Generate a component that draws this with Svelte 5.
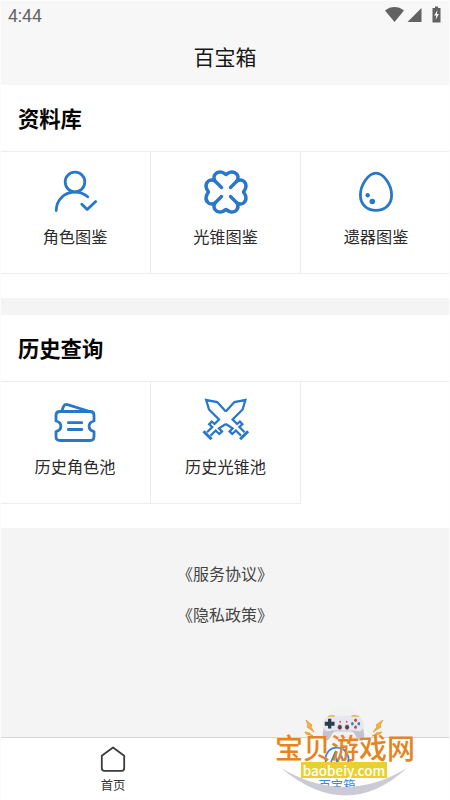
<script lang="ts">
  type Item = { icon: string; label: string };

  const sections: { title: string; items: Item[] }[] = [
    {
      title: '资料库',
      items: [
        { icon: 'role', label: '角色图鉴' },
        { icon: 'clover', label: '光锥图鉴' },
        { icon: 'egg', label: '遗器图鉴' },
      ],
    },
    {
      title: '历史查询',
      items: [
        { icon: 'ticket', label: '历史角色池' },
        { icon: 'swords', label: '历史光锥池' },
      ],
    },
  ];

  const links = ['《服务协议》', '《隐私政策》'];
</script>

<div class="page">
  <header>
    <div class="status">
      <span class="time">4:44</span>
      <svg class="status-icons" width="60" height="18" viewBox="0 0 60 18" fill="#626262">
        <path d="M2 4.500C8-.1 15-.1 21 4.500L11.500 16z" />
        <path d="M38.500 2v14H24.500z" />
        <path d="M49.500 2h2.500V.5h3V2h2.500v14.500h-8z" />
        <path d="M54.500 4l-3.300 5.500h2l-.6 4.300 3.300-5.800h-2z" fill="#f7f7f7" />
      </svg>
    </div>
    <h1>百宝箱</h1>
  </header>

  <main>
    {#each sections as section}
      <section>
        <h2>{section.title}</h2>
        <div class="grid">
          {#each section.items as item}
            <button class="cell" type="button">
              <svg class="icon" width="48" height="48" viewBox="0 0 48 48">
                {#if item.icon === 'role'}
                  <circle cx="24" cy="14" r="9.8" />
                  <path d="M5.200 42.500C5.500 31.500 13.500 24.200 24 24.200c5 0 9.300 1.700 12.700 4.600M30.800 36.200l5.400 5.400 8.500-8" />
                {:else if item.icon === 'clover'}
                  <g class="clover" transform="translate(24 24)">
                    {#each [0, 90, 180, 270] as angle}
                      <path
                        transform="rotate({angle})"
                        d="M-4.500-4.500L-11-11C-14-16.500-9.500-20.800-4.500-19.800Q-2.500-19.300 0-17.500Q2.500-19.300 4.500-19.800C9.500-20.800 14-16.500 11-11"
                      />
                    {/each}
                  </g>
                {:else if item.icon === 'egg'}
                  <path d="M24 5.200c7.500 0 15.600 11.500 15.600 21.800 0 9.500-6.600 15.400-15.600 15.400S8.400 36.500 8.400 27C8.400 16.700 16.500 5.200 24 5.200z" />
                  <g class="dots">
                    <circle cx="15.700" cy="27.200" r="2.200" />
                    <circle cx="20.300" cy="33.500" r="2.800" />
                  </g>
                {:else if item.icon === 'ticket'}
                  <path d="M9 13.500h30q4 0 4 4v5.500c-6.500 1.500-6.500 9 0 10.500v5q0 4-4 4H9q-4 0-4-4v-5c6.500-1.500 6.500-9 0-10.500v-5.500q0-4 4-4z" />
                  <path d="M11 12.500l1.500-4q1.200-2.600 4-1.800L37 13M17.300 24.700h13.500M17.300 31.500h13.500" />
                {:else}
                  <g class="swords">
                    {#each ['', 'translate(47.600 0) scale(-1 1)'] as side}
                      <path
                        transform={side}
                        d="M23.800 13.500L15.200 4 4.200 2l2.800 9.500 10 10L12.500 26l-2.800-2.500-2.500 2.700 3 2.800L5 34.200M8.500 37.700l5.200-5.200 3.600 3.500 2.700-2.600-3-3L23.800 26"
                      />
                      <path class="pommel" transform={side} d="M1.500 33.300l8 8" />
                    {/each}
                  </g>
                {/if}
              </svg>
              <span>{item.label}</span>
            </button>
          {/each}
        </div>
      </section>
    {/each}

    <div class="links">
      {#each links as link}
        <span>{link}</span>
      {/each}
    </div>
  </main>

  <nav>
    <div class="tab">
      <svg width="28" height="28" viewBox="0 0 28 28" fill="none" stroke="#3c3c3f" stroke-width="1.800" stroke-linejoin="round">
        <path d="M14 2.500l11.200 8.300v12.500q0 2.500-2.500 2.500H5.300q-2.500 0-2.500-2.500V10.800z" />
      </svg>
      <span>首页</span>
    </div>
    <div class="tab active">
      <svg width="28" height="28" viewBox="0 0 28 28" fill="none" stroke="#3d86df" stroke-width="1.800">
        <circle cx="14" cy="14" r="11.500" />
        <path d="M8 17l4-9 2 10 4-8 2 5" />
      </svg>
      <span>百宝箱</span>
    </div>
  </nav>

  <div class="watermark">
    <svg width="150" height="90" viewBox="0 0 150 90">
      <circle cx="69" cy="20" r="20" fill="#eeeff0" opacity=".65" />
      <g transform="translate(8.500 2) scale(.81 .98)">
        <path d="M54 8q0-3 6-3h3v4M84 9V5h4q6 0 6 3" fill="#e8b84d" />
        <path d="M58 7h32c5 0 7 4 9 15 2 7-1 11-5 9-5-2-5-9-11-9H65c-6 0-6 7-11 9-4 2-7-2-5-9 2-11 4-15 9-15z" fill="#c2c3cf" />
        <path d="M57 7h34c5 0 8 4 8 8 0 6-5 8-10 6H59c-5 2-10 0-10-6 0-5 3-8 8-8z" fill="#e8e6ef" />
        <path d="M55 9h4v3h4v4h-4v3h-4v-3h-4v-4h4z" fill="#263f4c" />
        <g fill="#c8424d">
          <circle cx="89" cy="10.500" r="1.700" />
          <circle cx="89" cy="17.500" r="1.700" />
        </g>
        <g fill="#318aa2">
          <circle cx="85" cy="14" r="1.700" />
          <circle cx="93" cy="14" r="1.700" />
        </g>
        <g fill="#344653" stroke="#a05260" stroke-width=".7">
          <circle cx="69.500" cy="17.500" r="2.300" />
          <circle cx="78.500" cy="17.500" r="2.300" />
        </g>
        <circle cx="70" cy="12" r="1" fill="#c84d5a" />
        <circle cx="78" cy="12" r="1" fill="#c84d5a" />
      </g>
      <path d="M31 12l6 5-1 2 3 5-7-5 1-2zM30 24l5 1v1l3 2-7-2zM108 12l-7 5 1 2-4 5 8-5-1-2zM107 24l-6 1v1l-4 2 8-2z" fill="#f1b43c" stroke="#e19d32" stroke-width=".8" />
      <path d="M6 60Q70 98 132 60Q72 115 6 60z" fill="#cacbd6" />
    </svg>
    <strong>宝贝游戏网</strong>
    <em>baobeiy.com</em>
  </div>
</div>

<style>
  :global(body) {
    margin: 0;
  }

  .page {
    box-sizing: border-box;
    position: relative;
    display: flex;
    flex-direction: column;
    width: 450px;
    height: 800px;
    overflow: hidden;
    border: solid #fcfcfc;
    border-width: 1px 1px 0 1px;
    background: #f4f4f4;
    color: #2d2d2d;
    font-family: Roboto, 'Noto Sans CJK SC', sans-serif;
  }

  header {
    height: 84px;
    background: #f7f7f7;
  }

  .status {
    display: flex;
    justify-content: space-between;
    height: 29px;
    padding: 5px 6px 0 7px;
    box-sizing: border-box;
  }

  .time {
    color: #656565;
    font-size: 17.500px;
    line-height: 20px;
  }

  .status-icons {
    width: 60px;
  }

  h1 {
    margin: 0;
    color: #171717;
    font-size: 21px;
    font-weight: 400;
    line-height: 56px;
    text-align: center;
  }

  main {
    flex: 1;
  }

  section {
    height: 213px;
    margin-bottom: 17px;
    background: #fff;
  }

  h2 {
    box-sizing: border-box;
    height: 66px;
    margin: 0;
    padding-left: 17px;
    color: #050505;
    font-size: 21.300px;
    font-weight: 700;
    line-height: 69px;
  }

  .grid {
    display: grid;
    grid-template-columns: 150px 150px 148px;
    border-top: 1px solid #ececec;
  }

  .cell {
    box-sizing: border-box;
    display: flex;
    flex-direction: column;
    align-items: center;
    height: 122px;
    padding: 16px 0 0;
    border: 0;
    border-right: 1px solid #ececec;
    border-bottom: 1px solid #ececec;
    background: none;
    color: #2b2b2b;
    font: inherit;
    font-size: 16.200px;
    line-height: 24px;
  }

  .cell:first-child {
    padding-right: 1px;
  }

  .cell:nth-child(3) {
    border-right: 0;
    padding-left: 2px;
  }

  .cell span {
    margin-top: 10px;
  }

  .icon {
    fill: none;
    stroke: #2877c8;
    stroke-width: 2.800;
    stroke-linecap: round;
    stroke-linejoin: round;
    flex: none;
  }

  .clover {
    stroke-width: 3.400;
  }

  .dots {
    fill: #2877c8;
    stroke: none;
  }

  .swords {
    stroke-width: 2.300;
    stroke-linecap: butt;
    stroke-linejoin: miter;
  }

  .pommel {
    stroke-width: 3;
  }

  .links {
    display: flex;
    flex-direction: column;
    align-items: center;
    gap: 17px;
    padding-top: 18px;
    color: #444;
    font-size: 16px;
    line-height: 24px;
  }

  nav {
    display: flex;
    height: 62px;
    border-top: 1px solid #d5d5d5;
    background: #fff;
  }

  .tab {
    display: flex;
    flex: 1;
    flex-direction: column;
    align-items: center;
    padding-top: 7px;
    color: #333;
    font-size: 12.300px;
    line-height: 18px;
  }

  .tab span {
    margin-top: 4px;
  }

  .active {
    color: #3d86df;
  }

  /* site stamp floats over the tab bar */
  .watermark {
    position: absolute;
    top: 707px;
    left: 274px;
    width: 150px;
    height: 90px;
  }

  .watermark svg {
    position: absolute;
    inset: 0;
  }

  .watermark strong {
    position: absolute;
    top: 28px;
    left: 0;
    color: #e68422;
    font-size: 28px;
    font-weight: 500;
    line-height: 28px;
    white-space: nowrap;
  }

  .watermark em {
    position: absolute;
    top: 54px;
    left: 26px;
    width: 86px;
    height: 16px;
    background: #ead02e;
    color: #fff;
    font: normal 500 13.500px/16px 'Noto Sans CJK SC', sans-serif;
    text-align: center;
  }
</style>
